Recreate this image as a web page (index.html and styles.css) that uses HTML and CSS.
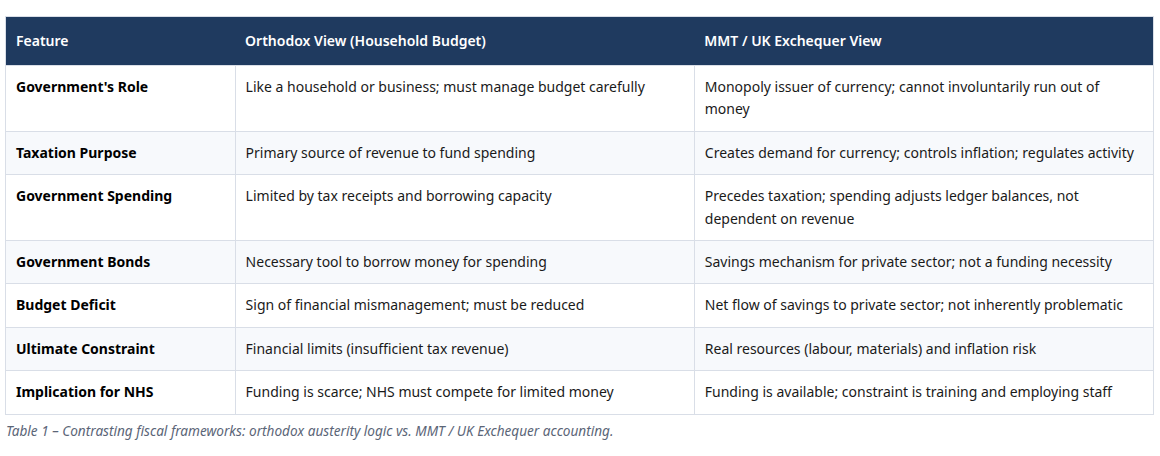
FILE: index.html
```html
<!DOCTYPE html>
<html lang="en">
<head>
<meta charset="utf-8">
<title>Fiscal frameworks</title>
<link rel="stylesheet" href="styles.css">
</head>
<body>
<figure class="fig">
  <table class="cmp">
    <colgroup>
      <col class="c1"><col class="c2"><col class="c3">
    </colgroup>
    <thead>
      <tr><th>Feature</th><th>Orthodox View (Household Budget)</th><th>MMT / UK Exchequer View</th></tr>
    </thead>
    <tbody>
      <tr><td>Government's Role</td><td>Like a household or business; must manage budget carefully</td><td>Monopoly issuer of currency; cannot involuntarily run out of money</td></tr>
      <tr><td>Taxation Purpose</td><td>Primary source of revenue to fund spending</td><td>Creates demand for currency; controls inflation; regulates activity</td></tr>
      <tr><td>Government Spending</td><td>Limited by tax receipts and borrowing capacity</td><td>Precedes taxation; spending adjusts ledger balances, not dependent on revenue</td></tr>
      <tr><td>Government Bonds</td><td>Necessary tool to borrow money for spending</td><td>Savings mechanism for private sector; not a funding necessity</td></tr>
      <tr><td>Budget Deficit</td><td>Sign of financial mismanagement; must be reduced</td><td>Net flow of savings to private sector; not inherently problematic</td></tr>
      <tr><td>Ultimate Constraint</td><td>Financial limits (insufficient tax revenue)</td><td>Real resources (labour, materials) and inflation risk</td></tr>
      <tr><td>Implication for NHS</td><td>Funding is scarce; NHS must compete for limited money</td><td>Funding is available; constraint is training and employing staff</td></tr>
    </tbody>
  </table>
  <figcaption class="cap">Table 1 – Contrasting fiscal frameworks: orthodox austerity logic vs. MMT / UK Exchequer accounting.</figcaption>
</figure>
</body>
</html>
```
FILE: styles.css
```css
html, body { margin: 0; padding: 0; background: #fff; }
body {
  font-family: "Noto Sans", "Open Sans", sans-serif;
  font-size: 14px;
  color: #1a1a1a;
}
.fig { margin: 0; padding: 16px 6px 0 5px; }
.cmp {
  width: 100%;
  border-collapse: collapse;
  table-layout: fixed;
  border: 1px solid #d9dee7;
}
.c1 { width: 20%; }
.c2 { width: 40%; }
.c3 { width: 40%; }
.cmp th {
  background: #1f3a5f;
  color: #fff;
  font-weight: 600;
  text-align: left;
  padding: 13px 10px;
  line-height: 22px;
}
.cmp td {
  padding: 10px 10px;
  line-height: 22.4px;
  vertical-align: top;
  border: 1px solid #d9dee7;
}
.cmp thead th { border: none; }
.cmp td:first-child { font-weight: 700; color: #000; }
.cmp tbody tr:nth-child(even) td { background: #f7f9fc; }
.cap {
  margin-top: 6px;
  padding-left: 1px;
  font-size: 13.6px;
  line-height: 20px;
  font-style: italic;
  color: #5b6577;
}
```
